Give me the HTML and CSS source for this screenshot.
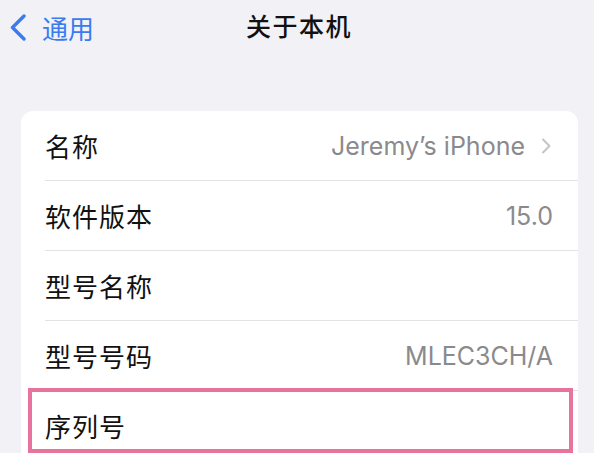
FILE: index.html
```html
<!DOCTYPE html>
<html lang="zh-CN">
<head>
    <meta charset="UTF-8">
    <meta name="viewport" content="width=device-width, initial-scale=1.0">
    <title>关于本机</title>
    <link rel="stylesheet" href="styles.css">
</head>
<body>
    <header class="nav">
        <a class="back" href="#">
            <svg class="back-icon" width="18" height="27" viewBox="0 0 18 27">
                <path d="M15 2 L3.5 13.5 L15 25" fill="none" stroke="#3a7bf0" stroke-width="3.4" stroke-linecap="round" stroke-linejoin="round"/>
            </svg>
            <span>通用</span>
        </a>
        <h1 class="title">关于本机</h1>
    </header>

    <section class="card">
        <div class="row">
            <div class="row-inner">
                <span class="label">名称</span>
                <span class="value">Jeremy’s iPhone
                    <svg class="chev" width="11" height="16" viewBox="0 0 11 16">
                        <path d="M2 1.5 L8.5 8 L2 14.5" fill="none" stroke="#c4c4c8" stroke-width="2" stroke-linecap="round" stroke-linejoin="round"/>
                    </svg>
                </span>
            </div>
        </div>
        <div class="row">
            <div class="row-inner">
                <span class="label">软件版本</span>
                <span class="value">15.0</span>
            </div>
        </div>
        <div class="row">
            <div class="row-inner">
                <span class="label">型号名称</span>
                <span class="value"></span>
            </div>
        </div>
        <div class="row">
            <div class="row-inner">
                <span class="label">型号号码</span>
                <span class="value">MLEC3CH/A</span>
            </div>
        </div>
        <div class="row last">
            <div class="row-inner">
                <span class="label">序列号</span>
                <span class="value"></span>
            </div>
            <span class="highlight"></span>
        </div>
    </section>
</body>
</html>
```

FILE: styles.css
```css
body {
    margin: 0;
    background: #f1f1f6;
    font-family: Inter, "Noto Sans CJK SC", sans-serif;
    overflow: hidden;
}

.nav {
    position: relative;
    height: 50px;
    display: flex;
    align-items: center;
    justify-content: center;
}

.back {
    position: absolute;
    left: 9px;
    top: 9px;
    display: flex;
    align-items: center;
    gap: 15px;
    color: #3a7bf0;
    text-decoration: none;
    font-size: 26px;
    font-family: "Noto Sans CJK SC", sans-serif;
}

.title {
    margin: 0;
    font-size: 25px;
    font-weight: 500;
    color: #111;
    font-family: "Noto Sans CJK SC", sans-serif;
    letter-spacing: 1.5px;
    padding-left: 4px;
}

.card {
    margin: 61px 16px 0 21px;
    background: #fff;
    border-radius: 12px 12px 0 0;
}

.row {
    position: relative;
    padding-left: 24px;
    height: 70px;
}

.row-inner {
    height: 69px;
    display: flex;
    align-items: center;
    justify-content: space-between;
    padding-right: 25px;
    border-bottom: 1px solid #e3e3e6;
}

.last .row-inner {
    border-bottom: none;
}

.label {
    font-family: "Noto Sans CJK SC", sans-serif;
    font-size: 26px;
    color: #111;
    letter-spacing: 1px;
}

.value {
    display: flex;
    align-items: center;
    gap: 16px;
    font-size: 25px;
    color: #8a8a8e;
}

.chev {
    margin-right: 1px;
}

.highlight {
    position: absolute;
    left: 7px;
    right: 5px;
    top: -3px;
    height: 65px;
    border: 4px solid #e8739c;
    box-sizing: border-box;
}
```
